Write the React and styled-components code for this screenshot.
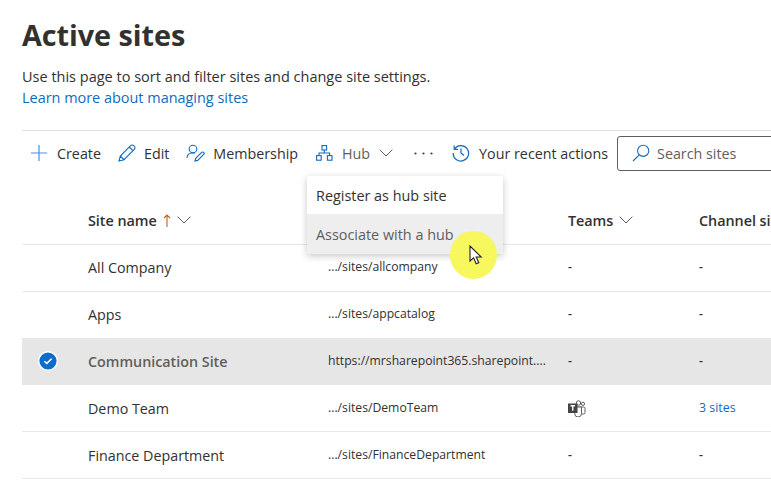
import React from "react";
import styled, { createGlobalStyle } from "styled-components";

const Global = createGlobalStyle`
  html, body { margin: 0; padding: 0; background: #fff; }
  body { width: 771px; height: 488px; overflow: hidden; font-family: "Open Sans", "Noto Sans", sans-serif; color: #323130; }
`;
const Page = styled.div`position: relative; width: 771px; height: 488px; overflow: hidden; padding-left: 22px; box-sizing: border-box;`;
const Inner = styled.div`width: 900px;`;
const Title = styled.h1`margin: 0; padding-top: 15px; height: 40px; line-height: 40px; font-size: 28.8px; font-weight: 700; letter-spacing: -0.05px; color: #323130;`;
const Desc = styled.p`margin: 11px 0 0; font-size: 14.5px; line-height: 21px;`;
const Learn = styled.a`display: block; font-size: 14.45px; line-height: 21px; color: #0f6cbd;`;
const Toolbar = styled.div`margin-top: 22px; border-top: 1px solid #e1e1e1; height: 44px; display: flex; align-items: center; padding-left: 9px; font-size: 14.3px;`;
const Tool = styled.div`display: flex; align-items: center; gap: ${p => p.$gap || 8}px; margin-right: ${p => p.$mr ?? 17}px; color: ${p => p.$dim ? "#605e5c" : "#323130"}; white-space: nowrap;`;
const Search = styled.div`margin-left: 9px; width: 220px; height: 35px; box-sizing: border-box; border: 1px solid #605e5c; border-radius: 3px; display: flex; align-items: center; gap: 7px; padding-left: 14px; color: #605e5c;`;
const Row = styled.div`display: grid; grid-template-columns: 66px 240px 240px 131px 1fr; height: 45.8px; align-items: center; border-bottom: 1px solid ${p => p.$sel ? "#e6e6e6" : "#e8e8e8"}; background: ${p => p.$sel ? "#e6e6e6" : "transparent"};`;
const HeaderRow = styled(Row)`height: 48px; padding-top: 21px;`;
const Head = styled.div`display: flex; align-items: center; gap: ${p => p.$gap || 6}px; font-size: 14.4px; font-weight: 600; letter-spacing: -0.05px; white-space: nowrap;`;
const Name = styled.div`font-size: 14.3px; color: ${p => p.$sel ? "#605e5c" : "#323130"}; font-weight: ${p => p.$sel ? 600 : 400};`;
const Url = styled.div`font-size: 12.2px; color: #323130; white-space: nowrap; position: relative; top: -1px;`;
const Cell = styled.div`font-size: 12.2px; font-weight: 600; color: #323130; position: relative; top: -1px;`;
const IconCell = styled.div`line-height: 0;`;
const LinkCell = styled.a`font-size: 12.4px; color: #0f6cbd; position: relative; top: -1px;`;
const Check = styled.div`display: flex; justify-content: center; padding-right: 14px; line-height: 0;`;
const Menu = styled.div`position: absolute; left: 307px; top: 176px; width: 196px; height: 78px; background: #fff; box-shadow: 0 2px 7px rgba(0,0,0,.22); font-size: 14.4px;`;
const MenuItem = styled.div`height: ${p => p.$h}px; display: flex; align-items: center; padding-left: 9px; color: ${p => p.$hover ? "#605e5c" : "#323130"}; background: ${p => p.$hover ? "#eeeeee" : "#fff"};`;
const Highlight = styled.div`position: absolute; left: 450px; top: 231px; width: 47px; height: 48px; border-radius: 50%; background: #f7f75e;`;
const Pointer = styled.svg`position: absolute; left: 469px; top: 245px;`;

const B = "#0f6cbd";
const Chev = ({ c = "#605e5c" }) => (
  <svg width="14" height="8" viewBox="0 0 14 8" fill="none" stroke={c} strokeWidth="1"><path d="M.7.7 7 7 13.3.7" /></svg>
);
const Plus = () => <svg width="16" height="16" viewBox="0 0 16 16" stroke="#4a90d9" strokeWidth="1.2"><path d="M8 0v16M0 8h16" /></svg>;
const Pencil = () => (
  <svg width="18" height="18" viewBox="0 0 18 18" fill="none" stroke={B} strokeWidth="1.1"><path d="M1 17l1.3-5L12.6 1.7a2 2 0 0 1 3 0l.7.7a2 2 0 0 1 0 3L6 15.7 1 17zM2.3 12 6 15.7M11.3 3l3.7 3.7" /></svg>
);
const Member = () => (
  <svg width="19" height="18" viewBox="0 0 19 18" fill="none" stroke={B} strokeWidth="1.1"><circle cx="7" cy="5" r="3.8" /><path d="M1 14c0-3 2-5 5-5h3" /><path d="M9 17l.7-2.6 6-6a1.3 1.3 0 0 1 2 2l-6 6L9 17z" /></svg>
);
const HubIcon = () => (
  <svg width="17" height="16" viewBox="0 0 17 16" fill="none" stroke={B} strokeWidth="1.1"><rect x="6" y=".6" width="4.6" height="4.4" /><rect x=".6" y="10.6" width="4.6" height="4.6" /><rect x="11.4" y="10.6" width="4.6" height="4.6" /><path d="M8.3 5v3M3 10.6V8h10.6v2.6" /></svg>
);
const History = () => (
  <svg width="18" height="18" viewBox="0 0 18 18" fill="none" stroke={B} strokeWidth="1.2"><path d="M2.4 5.2A7.7 7.7 0 1 1 1.2 9" /><path d="M2.2 1.6v3.8H6" /><path d="M9 4.5V9l3 2.5" /></svg>
);
const Magnifier = () => (
  <svg width="18" height="18" viewBox="0 0 18 18" fill="none" stroke={B} strokeWidth="1.1"><circle cx="11.2" cy="6.8" r="5.6" /><path d="M7.2 10.8 1 17" /></svg>
);
const Up = () => <svg width="8" height="13" viewBox="0 0 8 13" fill="none" stroke="#b8662a" strokeWidth="1.1"><path d="M4 13V1M1 4l3-3 3 3" /></svg>;
const Dots = () => <svg width="19" height="3" viewBox="0 0 19 3" fill="#3f3e3c"><circle cx="1.5" cy="1.5" r="1.1" /><circle cx="9.5" cy="1.5" r="1.1" /><circle cx="17.5" cy="1.5" r="1.1" /></svg>;
const CheckIcon = () => (
  <svg width="20" height="20" viewBox="0 0 20 20"><circle cx="10" cy="10" r="10" fill="#fff" /><circle cx="10" cy="10" r="8.6" fill="#0f6cc8" /><path d="M6.4 10.2 8.8 12.4 13.6 7.8" fill="none" stroke="#fff" strokeWidth="1.5" /></svg>
);
const TeamsIcon = () => (
  <svg width="18" height="17" viewBox="0 0 18 17" fill="none"><rect x="7" y="7" width="10" height="7" rx="1.5" stroke="#605e5c" fill="#fff" /><circle cx="10.5" cy="3" r="2.2" stroke="#605e5c" fill="#fff" /><circle cx="15" cy="3.8" r="1.6" stroke="#605e5c" fill="#fff" /><path d="M6.5 7h7v6.5a3.4 3.4 0 0 1-6.8.2z" stroke="#605e5c" fill="#fff" /><rect x="0" y="3.5" width="9.5" height="9.5" fill="#444" /><path d="M2.5 5.8h4.5M4.75 5.8v5" stroke="#fff" strokeWidth="1.4" /></svg>
);

const sites = [
  { n: "All Company", u: ".../sites/allcompany" },
  { n: "Apps", u: ".../sites/appcatalog" },
  { n: "Communication Site", u: "https://mrsharepoint365.sharepoint....", sel: true },
  { n: "Demo Team", u: ".../sites/DemoTeam", team: true, ch: "3 sites" },
  { n: "Finance Department", u: ".../sites/FinanceDepartment" },
];

export default function App() {
  return (
    <Page>
      <Global />
      <Inner>
        <Title>Active sites</Title>
        <Desc>Use this page to sort and filter sites and change site settings.</Desc>
        <Learn>Learn more about managing sites</Learn>
        <Toolbar>
          <Tool $gap={10}><Plus />Create</Tool>
          <Tool><Pencil />Edit</Tool>
          <Tool $mr={18}><Member />Membership</Tool>
          <Tool $dim $gap={9} $mr={21}><HubIcon />Hub<Chev /></Tool>
          <Tool $mr={19}><Dots /></Tool>
          <Tool $gap={9} $mr={0}><History />Your recent actions</Tool>
          <Search><Magnifier />Search sites</Search>
        </Toolbar>
        <HeaderRow>
          <span />
          <Head>Site name <Up /><Chev /></Head>
          <span />
          <Head>Teams <Chev /></Head>
          <Head>Channel sites</Head>
        </HeaderRow>
        {sites.map(s => (
          <Row key={s.n} $sel={s.sel}>
            <Check>{s.sel && <CheckIcon />}</Check>
            <Name $sel={s.sel}>{s.n}</Name>
            <Url>{s.u}</Url>
            {s.team ? <IconCell><TeamsIcon /></IconCell> : <Cell>-</Cell>}
            {s.ch ? <LinkCell>{s.ch}</LinkCell> : <Cell>-</Cell>}
          </Row>
        ))}
      </Inner>
      <Menu>
        <MenuItem $h={38}>Register as hub site</MenuItem>
        <MenuItem $h={40} $hover>Associate with a hub</MenuItem>
      </Menu>
      <Highlight />
      <Pointer width="15" height="21" viewBox="0 0 15 21"><path d="M1 1v15l3.6-3.2 2.6 6 2.6-1-2.6-5.8h5z" fill="#fff" stroke="#222" strokeWidth="1.1" /></Pointer>
    </Page>
  );
}
